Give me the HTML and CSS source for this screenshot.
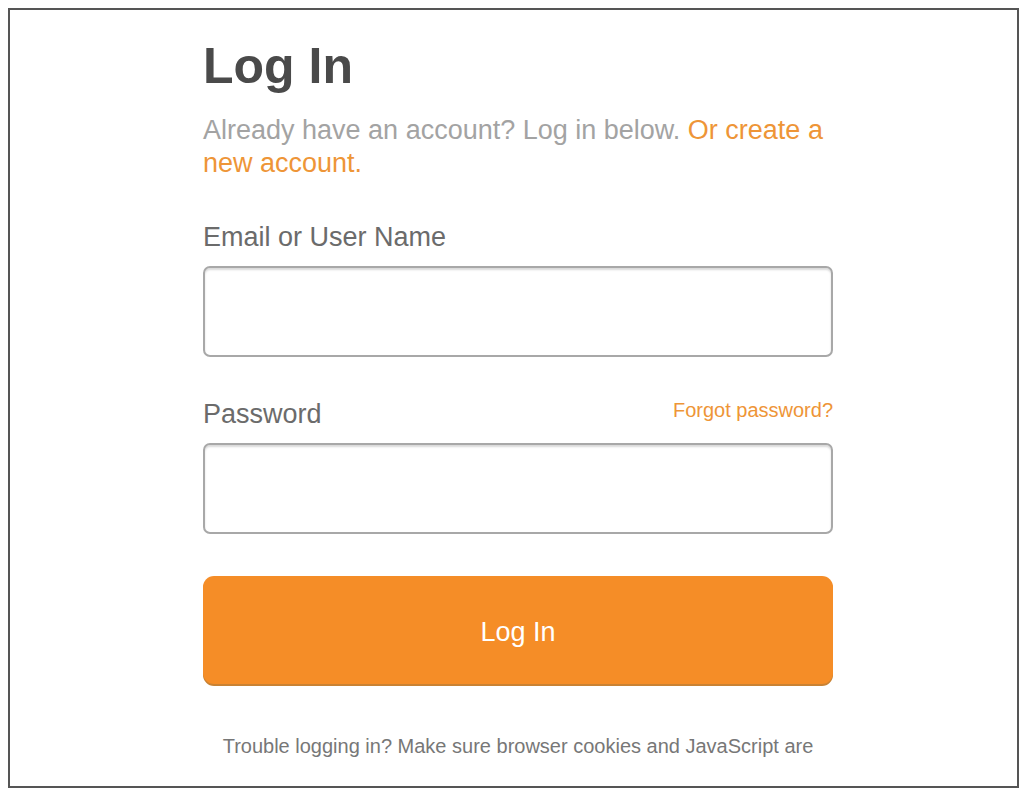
FILE: index.html
```html
<!doctype html>
<html lang="en">

<head>
	<meta charset="utf-8">
	<title>Log In</title>
	<link rel="stylesheet" href="styles.css">
</head>

<body>
	<div class="frame">
		<form class="login">
			<h1 class="title">Log In</h1>
			<p class="intro">Already have an account? Log in below. <a href="#">Or create a new account.</a></p>
			<div class="field">
				<div class="labelRow">
					<label for="user">Email or User Name</label>
				</div>
				<input id="user" type="text">
			</div>
			<div class="field">
				<div class="labelRow">
					<label for="pass">Password</label>
					<a href="#" class="forgot">Forgot password?</a>
				</div>
				<input id="pass" type="password">
			</div>
			<button type="button" class="submit">Log In</button>
			<p class="trouble">Trouble logging in? Make sure browser cookies and JavaScript are</p>
		</form>
	</div>
</body>

</html>
```

FILE: styles.css
```css
html,
body {
	margin: 0;
	padding: 0;
	background: white;
	font-family: "Liberation Sans", Arial, Helvetica, sans-serif;
}
body {
	padding: 8px 5px 8px 8px;
}
.frame {
	border: 2px solid #555;
	height: 780px;
	box-sizing: border-box;
	padding-left: 193px;
	overflow: hidden;
}
.login {
	width: 630px;
}
.title {
	margin: 28px 0 0;
	font-size: 50px;
	line-height: 56px;
	font-weight: bold;
	color: #4a4a4a;
}
.intro {
	margin: 20px 0 0;
	font-size: 27px;
	line-height: 33px;
	color: #a3a3a3;
}
.intro a,
.forgot {
	color: #ee9537;
	text-decoration: none;
}
.field {
	margin-top: 42px;
}
.field + .field {
	margin-top: 42px;
}
.labelRow {
	display: flex;
	justify-content: space-between;
	align-items: flex-start;
	height: 30px;
}
.labelRow label {
	font-size: 27px;
	line-height: 30px;
	color: #6b6b6b;
}
.forgot {
	font-size: 20px;
	line-height: 22px;
}
.field input {
	display: block;
	margin-top: 14px;
	width: 100%;
	height: 91px;
	box-sizing: border-box;
	border: 2px solid #a8a8a8;
	border-radius: 7px;
	box-shadow: inset 0 2px 2px rgba(0, 0, 0, 0.15);
	background: white;
}
.submit {
	display: block;
	margin-top: 42px;
	padding-top: 5px;
	width: 100%;
	height: 108px;
	border: none;
	border-radius: 11px;
	background: #f58d27;
	box-shadow: 0 2px 0 #c98233;
	color: white;
	font-family: inherit;
	font-size: 27px;
}
.trouble {
	margin: 50px 0 0;
	text-align: center;
	font-size: 20px;
	line-height: 24px;
	color: #777;
}
```
